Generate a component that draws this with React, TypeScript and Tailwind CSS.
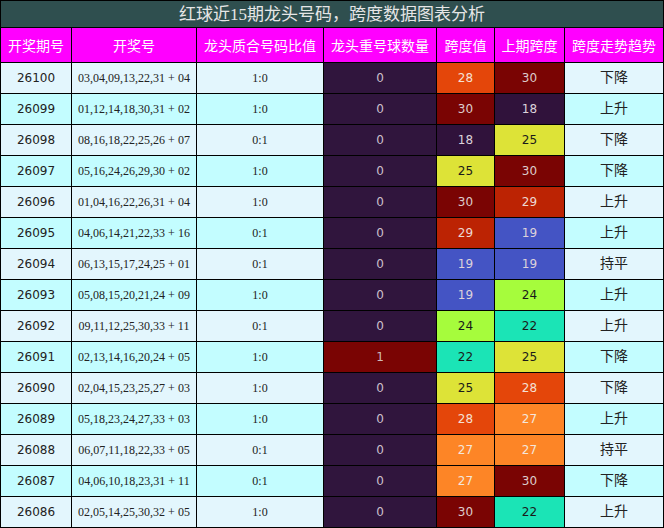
import React from "react";

type Row = [string, string, string, number, number, number, string];

const rows: Row[] = [
  ["26100", "03,04,09,13,22,31 + 04", "1:0", 0, 28, 30, "下降"],
  ["26099", "01,12,14,18,30,31 + 02", "1:0", 0, 30, 18, "上升"],
  ["26098", "08,16,18,22,25,26 + 07", "0:1", 0, 18, 25, "下降"],
  ["26097", "05,16,24,26,29,30 + 02", "1:0", 0, 25, 30, "下降"],
  ["26096", "01,04,16,22,26,31 + 04", "1:0", 0, 30, 29, "上升"],
  ["26095", "04,06,14,21,22,33 + 16", "0:1", 0, 29, 19, "上升"],
  ["26094", "06,13,15,17,24,25 + 01", "0:1", 0, 19, 19, "持平"],
  ["26093", "05,08,15,20,21,24 + 09", "1:0", 0, 19, 24, "上升"],
  ["26092", "09,11,12,25,30,33 + 11", "0:1", 0, 24, 22, "上升"],
  ["26091", "02,13,14,16,20,24 + 05", "1:0", 1, 22, 25, "下降"],
  ["26090", "02,04,15,23,25,27 + 03", "1:0", 0, 25, 28, "下降"],
  ["26089", "05,18,23,24,27,33 + 03", "1:0", 0, 28, 27, "上升"],
  ["26088", "06,07,11,18,22,33 + 05", "0:1", 0, 27, 27, "持平"],
  ["26087", "04,06,10,18,23,31 + 11", "0:1", 0, 27, 30, "下降"],
  ["26086", "02,05,14,25,30,32 + 05", "1:0", 0, 30, 22, "上升"],
];

const spanColor: Record<number, string> = {
  18: "bg-[#30123b] text-[#ddd2da]",
  19: "bg-[#4454c4] text-[#ddd2da]",
  22: "bg-[#1be4b6] text-[#1a1a1a]",
  24: "bg-[#a6fc3c] text-[#1a1a1a]",
  25: "bg-[#dde337] text-[#1a1a1a]",
  27: "bg-[#fd8526] text-[#f4e6dc]",
  28: "bg-[#e4460a] text-[#f4e0d6]",
  29: "bg-[#bc2303] text-[#ecd8d4]",
  30: "bg-[#7a0403] text-[#ddcccc]",
};

const repColor: Record<number, string> = {
  0: "bg-[#30153d] text-[#ccc0cc]",
  1: "bg-[#7a0403] text-[#ccbcbc]",
};

const headers = ["开奖期号", "开奖号", "龙头质合号码比值", "龙头重号球数量", "跨度值", "上期跨度", "跨度走势趋势"];

function HeatCell({ cls, v }: { cls: string; v: number }) {
  return (
    <div className={`flex items-center justify-center text-[12px] font-['DejaVu_Sans',sans-serif] ${cls}`}>
      {v}
    </div>
  );
}

export default function App() {
  return (
    <div className="w-[664px] h-[528px] bg-black p-px flex flex-col gap-px">
      <div className="h-[26px] bg-[#2f4f4f] text-[#e6e6e6] text-[17px] flex items-center justify-center leading-none font-['Liberation_Serif','Noto_Sans_CJK_SC',serif]">
        红球近15期龙头号码，跨度数据图表分析
      </div>
      <div className="grid grid-cols-[70px_124px_126px_112px_57px_69px_98px] gap-px">
        {headers.map((h) => (
          <div
            key={h}
            className="h-[34px] bg-[#ff00ff] text-white text-[14px] leading-none flex items-center justify-center whitespace-nowrap font-['Noto_Sans_CJK_SC',sans-serif]"
          >
            {h}
          </div>
        ))}
        {rows.map((r, i) => {
          const bg = i % 2 === 0 ? "bg-[#e3f6fd]" : "bg-[#c3fdff]";
          return (
            <React.Fragment key={r[0]}>
              <div className={`h-[30px] ${bg} flex items-center justify-center text-[12px] text-[#222] font-['DejaVu_Sans',sans-serif]`}>
                {r[0]}
              </div>
              <div className={`${bg} flex items-center justify-center text-[12px] text-[#222] whitespace-nowrap font-['Liberation_Serif',serif]`}>
                {r[1]}
              </div>
              <div className={`${bg} flex items-center justify-center text-[12px] text-[#222] font-['Liberation_Serif',serif]`}>
                {r[2]}
              </div>
              <HeatCell cls={repColor[r[3]]} v={r[3]} />
              <HeatCell cls={spanColor[r[4]]} v={r[4]} />
              <HeatCell cls={spanColor[r[5]]} v={r[5]} />
              <div className={`${bg} flex items-center justify-center pb-[4px] text-[14px] leading-none text-[#222] font-['Noto_Sans_CJK_SC',sans-serif]`}>
                {r[6]}
              </div>
            </React.Fragment>
          );
        })}
      </div>
    </div>
  );
}
